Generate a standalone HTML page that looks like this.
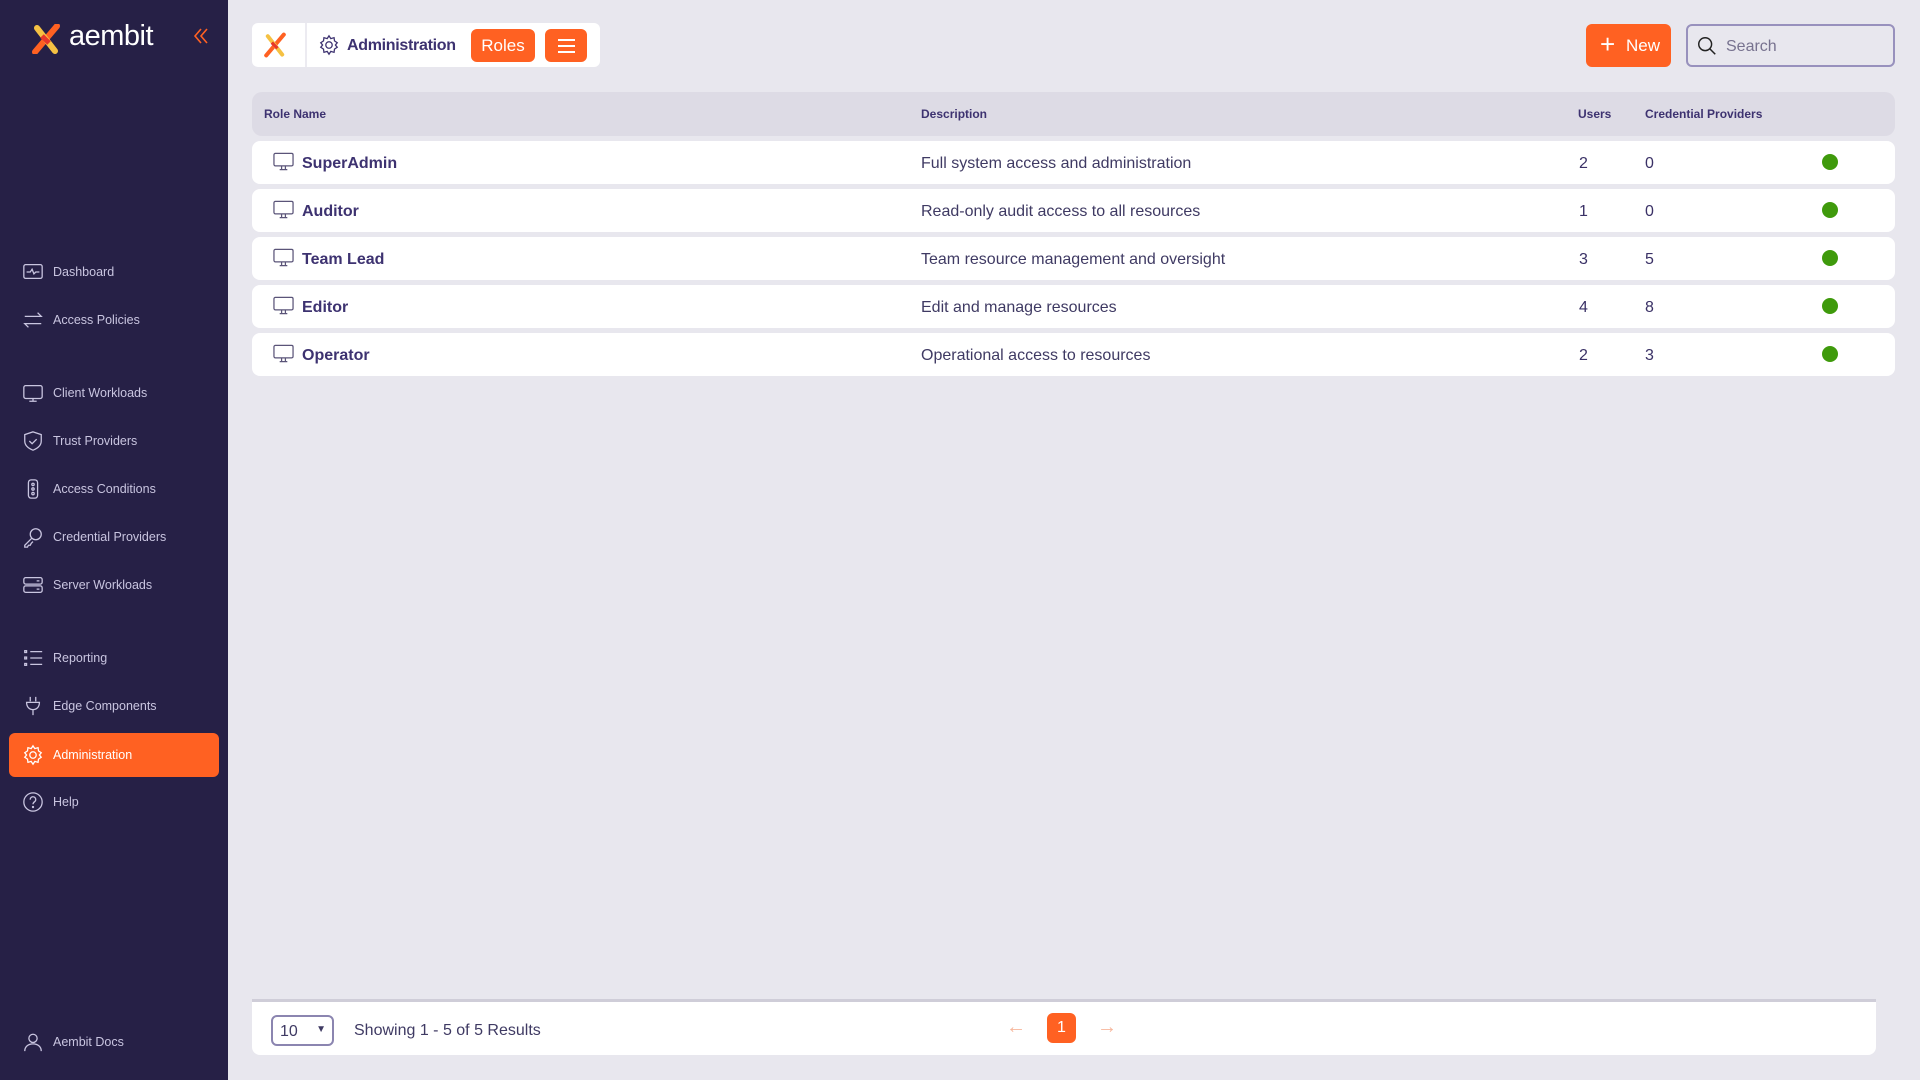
<!DOCTYPE html>
<html><head><meta charset="utf-8"><style>
*{box-sizing:border-box;margin:0;padding:0}
body{width:1920px;height:1080px;overflow:hidden;background:#e8e7ee;font-family:"Liberation Sans",sans-serif;color:#3a3166;position:relative}
.sb{position:absolute;left:0;top:0;width:228px;height:1080px;background:#262046}
.nav{position:absolute;left:0;width:228px;height:44px;display:flex;align-items:center;color:#c9c5e0;font-size:12.5px}
.nav svg{position:absolute;left:22px;width:22px;height:22px;fill:none;stroke:#c9c5e0;stroke-width:1.4}
.nav span{position:absolute;left:53px}
.nav.act{left:9px;width:210px;background:#ff6122;border-radius:6px;color:#fff}
.nav.act svg{left:13px;stroke:#fff}
.nav.act span{left:44px}
.abs{position:absolute}
.hdr{left:252px;top:23px;width:348px;height:44px;background:#fff;border-radius:6px}
.btn{background:#ff6122;border-radius:6px;color:#fff}
.th{left:252px;top:92px;width:1643px;height:44px;background:#dddbe5;border-radius:10px;font-size:12px;font-weight:bold;color:#3d3270}
.th div{position:absolute;top:15px}
.row{left:252px;width:1643px;height:43px;background:#fff;border-radius:8px;font-size:16px}
.row div{position:absolute;top:14px}
.row .n{left:50px;font-weight:bold;color:#3d3270}
.row .d{left:669px;color:#3f3a63}
.row .u{left:1327px}
.row .c{left:1393px}
.row .dot{left:1570px;top:13px;width:16px;height:16px;border-radius:50%;background:#3f9a0c}
.row svg{position:absolute;left:21px;top:11px;width:21px;height:20px;fill:none;stroke:#5a5478;stroke-width:1.3}
</style></head><body>
<div class="sb">
 <svg class="abs" style="left:31px;top:24px" width="40" height="30" viewBox="0 0 40 30"><path d="M4 28L26 2" stroke="#ff6122" stroke-width="6" stroke-linecap="round"/><path d="M6 4L24 27" stroke="#f5c143" stroke-width="6" stroke-linecap="round"/><path d="M11 12L18 19" stroke="#e8362a" stroke-width="5"/></svg>
 <div class="abs" style="left:69px;top:20px;font-size:29px;color:#fff;letter-spacing:-0.5px">aembit</div>
 <svg class="abs" style="left:192px;top:27px" width="18" height="18" viewBox="0 0 18 18" fill="none" stroke="#ff6122" stroke-width="1.6"><path d="M9 2L3 9l6 7M15 2L9 9l6 7"/></svg>
 <div class="nav" style="top:250px"><svg viewBox="0 0 24 24"><rect x="2" y="4" width="20" height="15" rx="2"/><path d="M5 12h4l2-3 2 5 2-2h4"/></svg><span>Dashboard</span></div>
 <div class="nav" style="top:298px"><svg viewBox="0 0 24 24"><path d="M3 8h18l-4-4M21 16H3l4 4"/></svg><span>Access Policies</span></div>
 <div class="nav" style="top:371px"><svg viewBox="0 0 24 24"><rect x="2" y="4" width="20" height="14" rx="2"/><path d="M8 21h8M12 18v3"/></svg><span>Client Workloads</span></div>
 <div class="nav" style="top:419px"><svg viewBox="0 0 24 24"><path d="M12 2l9 3v7c0 5-4 8-9 10-5-2-9-5-9-10V5z"/><path d="M8 12l3 3 5-5"/></svg><span>Trust Providers</span></div>
 <div class="nav" style="top:467px"><svg viewBox="0 0 24 24"><rect x="7" y="2" width="10" height="20" rx="3"/><circle cx="12" cy="7" r="1.3"/><circle cx="12" cy="12" r="1.3"/><circle cx="12" cy="17" r="1.3"/></svg><span>Access Conditions</span></div>
 <div class="nav" style="top:515px"><svg viewBox="0 0 24 24"><circle cx="15" cy="9" r="6"/><path d="M11 13l-8 8v2h3l1-2 2 0 1-2 2-2"/></svg><span>Credential Providers</span></div>
 <div class="nav" style="top:563px"><svg viewBox="0 0 24 24"><rect x="2" y="4" width="20" height="7" rx="2"/><rect x="2" y="13" width="20" height="7" rx="2"/><path d="M16 7.5h3M16 16.5h3"/></svg><span>Server Workloads</span></div>
 <div class="nav" style="top:636px"><svg viewBox="0 0 24 24"><path d="M9 5h13M9 12h13M9 19h13"/><rect x="3" y="4" width="2" height="2"/><rect x="3" y="11" width="2" height="2"/><rect x="3" y="18" width="2" height="2"/></svg><span>Reporting</span></div>
 <div class="nav" style="top:684px"><svg viewBox="0 0 24 24"><path d="M9 2v5M15 2v5M5 8h14c0 5-3 8-7 8s-7-3-7-8zM12 16v6"/></svg><span>Edge Components</span></div>
 <div class="nav act" style="top:733px"><svg viewBox="0 0 24 24"><circle cx="12" cy="12" r="3.5"/><path d="M12 2l2 3 3.5-1 .5 3.5 3 2-2 2.5 2 2.5-3 2-.5 3.5-3.5-1-2 3-2-3-3.5 1-.5-3.5-3-2 2-2.5-2-2.5 3-2 .5-3.5 3.5 1z"/></svg><span>Administration</span></div>
 <div class="nav" style="top:780px"><svg viewBox="0 0 24 24"><circle cx="12" cy="12" r="10"/><path d="M9 9.5a3 3 0 115 2c-1 .8-2 1.3-2 3"/><circle cx="12" cy="17.5" r=".6"/></svg><span>Help</span></div>
 <div class="nav" style="top:1020px"><svg viewBox="0 0 24 24"><circle cx="12" cy="8" r="4.5"/><path d="M3 22c0-5 4-8 9-8s9 3 9 8"/></svg><span>Aembit Docs</span></div>
</div>

<div class="abs hdr">
 <svg class="abs" style="left:11px;top:7px" width="32" height="30" viewBox="0 0 40 30"><path d="M4 28L26 2" stroke="#ff6122" stroke-width="5" stroke-linecap="round"/><path d="M6 4L24 27" stroke="#f5c143" stroke-width="5" stroke-linecap="round"/><path d="M11 12L18 19" stroke="#e8362a" stroke-width="4"/></svg>
 <div class="abs" style="left:53px;top:0;width:2px;height:44px;background:#ecebf1"></div>
 <svg class="abs" style="left:66px;top:11px" width="22" height="22" viewBox="0 0 24 24" fill="none" stroke="#3d3270" stroke-width="1.4"><circle cx="12" cy="12" r="3.5"/><path d="M12 2l2 3 3.5-1 .5 3.5 3 2-2 2.5 2 2.5-3 2-.5 3.5-3.5-1-2 3-2-3-3.5 1-.5-3.5-3-2 2-2.5-2-2.5 3-2 .5-3.5 3.5 1z"/></svg>
 <div class="abs" style="left:95px;top:14px;font-size:16px;font-weight:bold;color:#3d3270;letter-spacing:-0.3px">Administration</div>
 <div class="abs btn" style="left:219px;top:6px;width:64px;height:33px;font-size:17px;text-align:center;line-height:33px">Roles</div>
 <div class="abs btn" style="left:293px;top:6px;width:42px;height:33px"><div class="abs" style="left:13px;top:10px;width:17px;height:2px;background:#fff;box-shadow:0 6px 0 #fff,0 12px 0 #fff"></div></div>
</div>

<div class="abs btn" style="left:1586px;top:24px;width:85px;height:43px;font-size:17px;line-height:43px"><span style="position:absolute;left:14px;font-size:26px;top:-1px;font-weight:300">+</span><span style="position:absolute;left:40px">New</span></div>
<div class="abs" style="left:1686px;top:24px;width:209px;height:43px;border:2px solid #9891bd;border-radius:6px">
 <svg class="abs" style="left:8px;top:9px" width="22" height="22" viewBox="0 0 24 24" fill="none" stroke="#222" stroke-width="1.6"><circle cx="10" cy="10" r="7"/><path d="M15 15l6 6"/></svg>
 <div class="abs" style="left:38px;top:12px;font-size:16px;color:#77728f">Search</div>
</div>

<div class="abs th"><div style="left:12px">Role Name</div><div style="left:669px">Description</div><div style="left:1326px">Users</div><div style="left:1393px">Credential Providers</div></div>

<div class="abs row" style="top:141px"><svg viewBox="0 0 22 20"><rect x="1" y="1" width="20" height="13" rx="1.5"/><path d="M7 18h8M9 14v4M13 14v4"/></svg><div class="n">SuperAdmin</div><div class="d">Full system access and administration</div><div class="u">2</div><div class="c">0</div><div class="dot"></div></div>
<div class="abs row" style="top:189px"><svg viewBox="0 0 22 20"><rect x="1" y="1" width="20" height="13" rx="1.5"/><path d="M7 18h8M9 14v4M13 14v4"/></svg><div class="n">Auditor</div><div class="d">Read-only audit access to all resources</div><div class="u">1</div><div class="c">0</div><div class="dot"></div></div>
<div class="abs row" style="top:237px"><svg viewBox="0 0 22 20"><rect x="1" y="1" width="20" height="13" rx="1.5"/><path d="M7 18h8M9 14v4M13 14v4"/></svg><div class="n">Team Lead</div><div class="d">Team resource management and oversight</div><div class="u">3</div><div class="c">5</div><div class="dot"></div></div>
<div class="abs row" style="top:285px"><svg viewBox="0 0 22 20"><rect x="1" y="1" width="20" height="13" rx="1.5"/><path d="M7 18h8M9 14v4M13 14v4"/></svg><div class="n">Editor</div><div class="d">Edit and manage resources</div><div class="u">4</div><div class="c">8</div><div class="dot"></div></div>
<div class="abs row" style="top:333px"><svg viewBox="0 0 22 20"><rect x="1" y="1" width="20" height="13" rx="1.5"/><path d="M7 18h8M9 14v4M13 14v4"/></svg><div class="n">Operator</div><div class="d">Operational access to resources</div><div class="u">2</div><div class="c">3</div><div class="dot"></div></div>

<div class="abs" style="left:252px;top:999px;width:1624px;height:56px;background:#fff;border-top:3px solid #cfcdd8;border-radius:0 0 8px 8px">
 <div class="abs" style="left:19px;top:13px;width:63px;height:31px;border:2px solid #8b85b0;border-radius:6px;font-size:16px;padding:6px 0 0 7px;color:#3f3a63">10<span style="position:absolute;right:6px;top:7px;font-size:10px">▼</span></div>
 <div class="abs" style="left:102px;top:20px;font-size:16px;color:#3f3a63">Showing 1 - 5 of 5 Results</div>
 <div class="abs" style="left:754px;top:14px;font-size:20px;color:#f7b79c">←</div>
 <div class="abs btn" style="left:795px;top:11px;width:29px;height:30px;text-align:center;line-height:30px;font-size:16px">1</div>
 <div class="abs" style="left:845px;top:14px;font-size:20px;color:#f7b79c">→</div>
</div>
</body></html>
